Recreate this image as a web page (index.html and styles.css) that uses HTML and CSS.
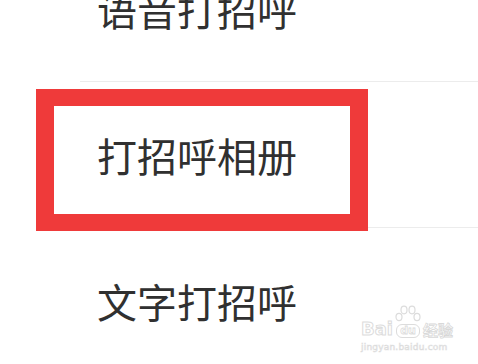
FILE: index.html
```html
<!DOCTYPE html>
<html lang="zh">
<head>
<meta charset="utf-8">
<link rel="stylesheet" href="styles.css">
</head>
<body>
<div class="screen">
  <ul class="menu">
    <li class="item"><span class="label">语音打招呼</span></li>
    <li class="item"><span class="label">打招呼相册</span></li>
    <li class="item"><span class="label">文字打招呼</span></li>
  </ul>
  <div class="highlight"></div>
  <div class="watermark">
    <div class="wm-row">
      <span class="wm-bai">Bai</span>
      <span class="wm-du">
        <svg class="paw" width="30" height="20" viewBox="0 0 30 20">
          <g fill="none" stroke="#dcdcdc" stroke-width="1.2">
            <ellipse cx="6" cy="13" rx="3" ry="3.6"/>
            <ellipse cx="11" cy="6" rx="3" ry="3.8"/>
            <ellipse cx="19" cy="6" rx="3" ry="3.8"/>
            <ellipse cx="24" cy="13" rx="3" ry="3.6"/>
          </g>
        </svg>
        <span class="du-blob">du</span>
      </span>
      <span class="wm-jy">经验</span>
    </div>
    <div class="wm-url">jingyan.baidu.com</div>
  </div>
</div>
</body>
</html>
```

FILE: styles.css
```css
html, body {
  margin: 0;
  padding: 0;
  background: #ffffff;
}

.screen {
  position: relative;
  width: 478px;
  height: 364px;
  overflow: hidden;
  font-family: "Noto Sans CJK SC", "Noto Sans", sans-serif;
}

.menu {
  list-style: none;
  margin: -64px 0 0 80px;
  padding: 0;
}

.item {
  height: 145px;
  border-bottom: 1px solid #ececec;
  display: flex;
  align-items: center;
  padding-left: 17px;
}

.label {
  font-size: 40px;
  line-height: 1;
  color: #303030;
  letter-spacing: 0;
}

.highlight {
  position: absolute;
  left: 36px;
  top: 89px;
  width: 296px;
  height: 108px;
  border: 18px solid #ef3a3a;
  border-top-width: 17px;
  border-bottom-width: 17px;
}

.watermark {
  position: absolute;
  left: 361px;
  top: 306px;
  display: flex;
  flex-direction: column;
  font-family: "DejaVu Sans", sans-serif;
  color: #ffffff;
}

.wm-row {
  display: flex;
  align-items: flex-end;
  height: 32px;
}

.wm-bai {
  font-size: 18px;
  font-weight: bold;
  line-height: 18px;
  color: #ffffff;
  -webkit-text-stroke: 1px #dcdcdc;
}

.wm-du {
  display: flex;
  flex-direction: column;
  align-items: center;
  width: 30px;
}

.paw {
  display: block;
}

.du-blob {
  font-size: 11px;
  font-weight: bold;
  line-height: 12px;
  padding: 0 3px;
  border: 1px solid #dcdcdc;
  border-radius: 6px;
  color: #ffffff;
  -webkit-text-stroke: 0.8px #dcdcdc;
}

.wm-jy {
  font-family: "Noto Sans CJK SC", sans-serif;
  font-size: 15px;
  font-weight: bold;
  line-height: 16px;
  color: #ffffff;
  -webkit-text-stroke: 0.8px #d8d8d8;
  margin-left: 0;
}

.wm-url {
  font-size: 9px;
  line-height: 12px;
  margin-top: 3px;
  color: #ffffff;
  -webkit-text-stroke: 0.6px #dcdcdc;
  letter-spacing: 0.2px;
}
```
